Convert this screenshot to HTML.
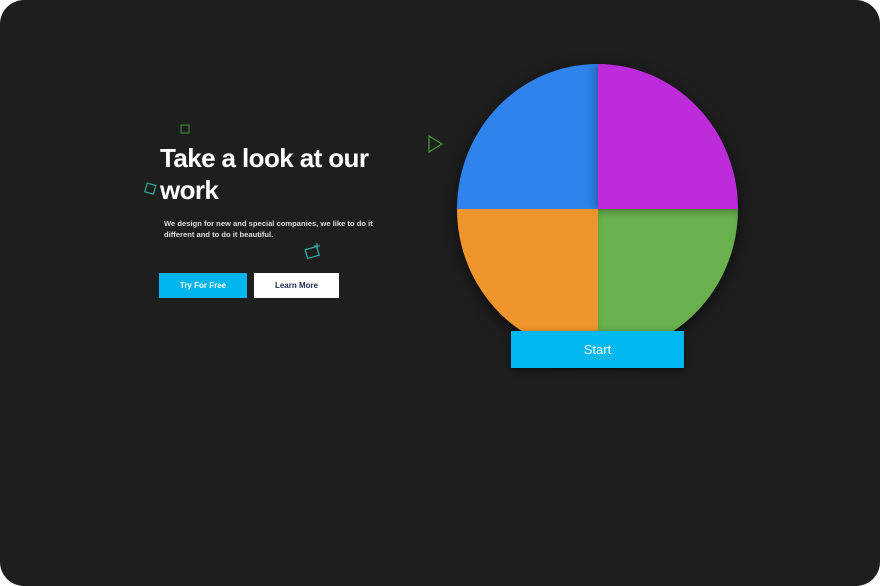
<!DOCTYPE html>
<html><head><style>
html,body{margin:0;padding:0;background:#fff;}
.page{position:relative;width:880px;height:586px;background:#1e1e1e;border-radius:24px;overflow:hidden;font-family:"Liberation Sans",sans-serif;}
h1{position:absolute;left:160px;top:142px;margin:0;color:#fff;font-size:26px;line-height:32px;font-weight:bold;letter-spacing:-0.6px;}
.p{position:absolute;left:164px;top:219px;color:#ddd;font-size:7.6px;line-height:10.5px;font-weight:bold;width:230px;}
.b1{position:absolute;left:159px;top:273px;width:88px;height:25px;background:#00b5ee;color:#fff;font-size:8px;text-align:center;line-height:25px;font-weight:bold;}
.b2{position:absolute;left:254px;top:273px;width:85px;height:25px;background:#fff;color:#1d2b4f;font-size:8px;text-align:center;line-height:25px;font-weight:bold;}
.wheel{position:absolute;left:457px;top:64px;width:281px;height:290px;border-radius:50%;overflow:hidden;box-shadow:0 4px 14px rgba(0,0,0,.6);}
.q{position:absolute;width:50%;height:50%;}
.start{position:absolute;left:511px;top:331px;width:173px;height:37px;background:#00b8f0;color:#fff;font-size:13px;text-align:center;line-height:37px;box-shadow:0 2px 6px rgba(0,0,0,.5);}
</style></head><body><div class="page">
<h1>Take a look at our<br>work</h1>
<div class="p">We design for new and special companies, we like to do it different and to do it beautiful.</div>
<div class="b1">Try For Free</div>
<div class="b2">Learn More</div>
<svg style="position:absolute;left:0;top:0" width="880" height="586">
<rect x="181" y="125" width="8" height="8" fill="none" stroke="#3a9a3a" stroke-width="1"/>
<polygon points="429,136 442,144 429,152" fill="none" stroke="#3a9a2a" stroke-width="1.3"/>
<rect x="146" y="184" width="9" height="9" fill="none" stroke="#2aa99a" stroke-width="1.2" transform="rotate(15 150 188)"/>
<rect x="306" y="248" width="12" height="9" fill="none" stroke="#2aa99a" stroke-width="1.3" transform="rotate(-15 312 252)"/>
<path d="M317 243v6M314 246h6" stroke="#2aa99a" stroke-width="1.3"/>
</svg>
<div class="wheel">
<div class="q" style="left:0;top:0;background:#2f83ec;"></div>
<div class="q" style="left:50%;top:0;background:#bd2bdb;box-shadow:-4px 0 8px rgba(0,0,0,.25);"></div>
<div class="q" style="left:0;top:50%;background:#f0952d;"></div>
<div class="q" style="left:50%;top:50%;background:#6ab04e;box-shadow:inset 0 6px 8px -4px rgba(0,0,0,.35);"></div>
</div>
<div class="start">Start</div>
</div></body></html>
